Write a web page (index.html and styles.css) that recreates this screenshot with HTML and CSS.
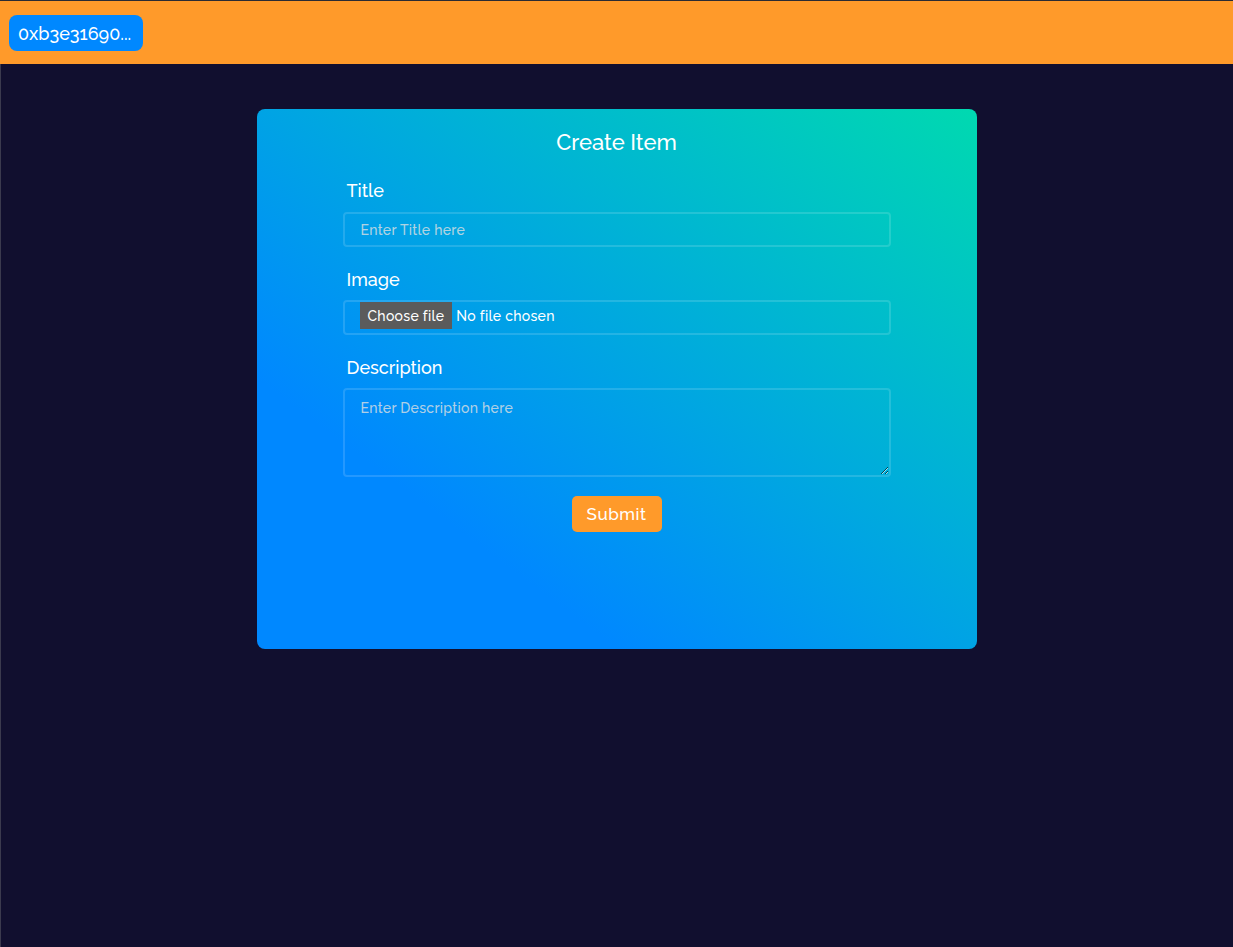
FILE: index.html
```html
<!DOCTYPE html>
<html lang="en">
<head>
<meta charset="utf-8">
<title>Create Item</title>
<link rel="stylesheet" href="styles.css">
</head>
<body>
<div class="page">
  <header class="navbar">
    <button class="address">0xb3e31690...</button>
  </header>
  <main class="main">
    <section class="card">
      <h2 class="card-title">Create Item</h2>
      <form class="form">
        <label class="label label-first" for="title">Title</label>
        <input class="field" id="title" type="text" placeholder="Enter Title here">
        <span class="label">Image</span>
        <div class="field file">
          <label class="file-btn" for="image">Choose file</label>
          <span class="file-name">No file chosen</span>
          <input class="file-input" id="image" type="file">
        </div>
        <label class="label" for="desc">Description</label>
        <textarea class="field area" id="desc" placeholder="Enter Description here"></textarea>
        <button class="submit" type="button">Submit</button>
      </form>
    </section>
  </main>
</div>
</body>
</html>
```

FILE: styles.css
```css
* { box-sizing: border-box; }
html, body { margin: 0; padding: 0; height: 100%; }
body {
  background: #110f2f;
  font-family: "Raleway", "Lato", "Open Sans", sans-serif;
  color: #fff;
}
.page {
  min-height: 100%;
  display: flex;
  flex-direction: column;
  border-top: 1px solid #2b2b33;
}
.navbar {
  height: 63px;
  background: #ff9a2a;
  display: flex;
  align-items: center;
  padding: 0 9px;
}
.address {
  height: 36px;
  width: 134px;
  border: none;
  border-radius: 8px;
  background: #0088ff;
  color: #fff;
  font-family: inherit;
  font-size: 18px;
  font-weight: 500;
  font-variant-numeric: oldstyle-nums;
  text-align: left;
  padding: 0 9px;
  margin-top: 1px;
  white-space: nowrap;
}
.main {
  flex: 1;
  border-left: 1px solid #3b3a4e;
  display: flex;
  justify-content: center;
  align-items: flex-start;
  padding-top: 45px;
  padding-right: 1px;
}
.card {
  width: 720px;
  height: 540px;
  border-radius: 8px;
  background: linear-gradient(to bottom left, #00d9b0 0%, #0088ff 75%);
  padding-top: 20px;
  display: flex;
  flex-direction: column;
  align-items: center;
}
.card-title {
  margin: 0;
  font-size: 22px;
  line-height: 26px;
  font-weight: 500;
}
.form {
  width: 548px;
  margin-top: 25px;
  display: flex;
  flex-direction: column;
}
.label {
  font-size: 18px;
  line-height: 22px;
  font-weight: 500;
  padding-left: 4px;
  margin-bottom: 9px;
}
.label-first {
  margin-bottom: 10px;
}
.field {
  height: 35px;
  border: 2px solid rgba(255, 255, 255, 0.14);
  border-radius: 4px;
  background: transparent;
  color: #fff;
  font-family: inherit;
  font-size: 14px;
  font-weight: 500;
  letter-spacing: 0.3px;
  padding: 0 16px;
  margin-bottom: 22px;
  outline: none;
}
.field::placeholder {
  color: rgba(225, 225, 225, 0.8);
}
.file {
  display: flex;
  align-items: flex-start;
  padding: 0 15px;
}
.file-btn {
  background: #5b5b5b;
  color: #fff;
  height: 27px;
  line-height: 28px;
  padding: 0 8px;
  margin-right: 4px;
  font-size: 14px;
  font-weight: 500;
}
.file-name {
  line-height: 28px;
  font-size: 14px;
  font-weight: 500;
}
.file-input {
  display: none;
}
.area {
  height: 89px;
  padding: 10px 16px;
  resize: vertical;
  margin-bottom: 19px;
  line-height: 17px;
}
.submit {
  align-self: center;
  width: 90px;
  height: 36px;
  border: none;
  border-radius: 5px;
  background: #ff9a2a;
  color: #fff;
  font-family: inherit;
  font-size: 17px;
  font-weight: 500;
  letter-spacing: 0.5px;
}
```
